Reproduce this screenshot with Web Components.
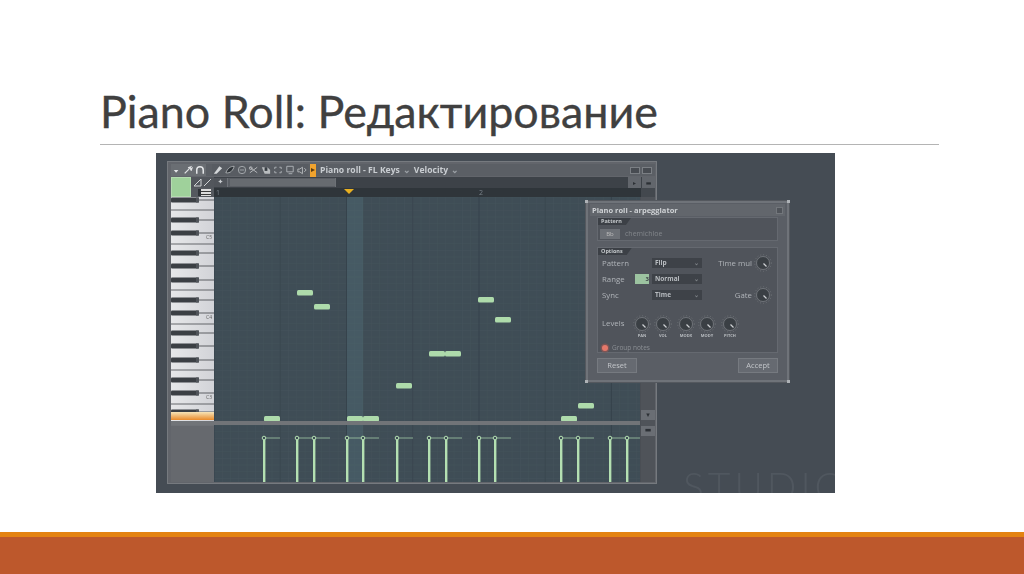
<!DOCTYPE html>
<html lang="ru"><head><meta charset="utf-8"><title>Piano Roll</title>
<style>html,body{margin:0;padding:0;background:#fff}body{width:1024px;height:574px;overflow:hidden}</style>
</head><body>
<slide-page>
  <slide-title>Piano Roll: Редактирование</slide-title>
  <piano-shot>
    <roll-toolbar></roll-toolbar>
    <roll-ruler></roll-ruler>
    <roll-body></roll-body>
    <arp-dialog></arp-dialog>
  </piano-shot>
</slide-page>
<script>
const def=(n,html)=>{customElements.define(n,class extends HTMLElement{constructor(){super();this.attachShadow({mode:'open'}).innerHTML=html;}})};

def('slide-page',`<style>:host{display:flex;flex-direction:column;width:1024px;height:574px;box-sizing:border-box}
.main{flex:1;display:flex;flex-direction:column;min-height:0}
footer{height:42px;background:#bd582c;border-top:5px solid #e48312;box-sizing:border-box}</style>
<div class="main"><slot></slot></div><footer></footer>`);

def('slide-title',`<style>:host{display:block;margin:0 85px 0 100px;padding-top:85px;height:59px;box-sizing:content-box;border-bottom:1px solid #b4b4b4;
font:44.800px/53px Lato,"Liberation Sans",sans-serif;color:#404040;-webkit-text-stroke:.35px #404040}
div{white-space:nowrap;height:59px}</style><div><slot></slot></div>`);

def('piano-shot',`<style>:host{display:block;position:relative;width:679px;height:340px;margin:8px 0 0 156px;background:#454c54;overflow:hidden;box-sizing:border-box;padding:8px 178px 9px 11px;filter:blur(.6px)}
.win{height:100%;background:#62656b;box-sizing:border-box;padding:2px 1px 3px 3px;display:flex;flex-direction:column;border:1px solid #767a7f}
.mark{position:absolute;left:527px;top:313px;font:300 39px/40px Lato,sans-serif;letter-spacing:4px;color:#50575f;white-space:nowrap}
::slotted(arp-dialog){position:absolute;left:430px;top:48px}</style>
<div class="mark">STUDIO</div><div class="win"><slot></slot></div>`);

const ico={
 menu:'<path d="M3 6h5L5.500 9z" fill="#e4e6e8"/>',
 wrench:'<path d="M2 10 7 5M6 3.500l3-1-1 1.500 1 1 1.500-1-1 3" stroke="#e0e2e4" stroke-width="1.500" fill="none"/>',
 magnet:'<path d="M3 10V6a3.500 3.500 0 0 1 7 0v4" stroke="#e6e8ea" stroke-width="1.600" fill="none"/>',
 pen:'<path d="M2 10 8 2l3 2-6 6z" fill="#d4d7d9"/>',
 brush:'<path d="M2 9c2-5 5-7 9-7-1 4-4 8-9 7z" fill="#2e3338" stroke="#b8bbbe" stroke-width=".9"/>',
 circ:'<circle cx="6.500" cy="6" r="4" fill="none" stroke="#a6aaae"/><path d="M4 6h5" stroke="#a6aaae"/>',
 cut:'<path d="M2 3l8 6M2 9l8-6" stroke="#b8bbbe"/><circle cx="3" cy="4" r="1.500" fill="none" stroke="#b8bbbe"/>',
 sel:'<path d="M2 3h6l3 3v4H5z" fill="#c9cccf" opacity=".85"/><path d="M5 3h3v4H5z" fill="#3a3f45"/>',
 box:'<path d="M3 3h2M8 3h2M3 9h2M8 9h2M3 3v2M10 3v2M3 7v2M10 7v2" stroke="#aeb2b6"/>',
 zoom:'<path d="M3 2h7v6H3zM5 10h4" stroke="#aeb2b6" fill="none"/>',
 spk:'<path d="M2 5h2l3-2v7L4 8H2zM9 4l2 2-2 2" stroke="#b5b8bb" fill="none"/>'
};
const ib=(k,w=12)=>`<svg width="${w}" height="12" viewBox="0 0 13 12">${ico[k]}</svg>`;
def('roll-toolbar',`<style>:host{display:flex;align-items:center;height:12px;margin-bottom:1px;font:bold 8.600px/12px "Open Sans",sans-serif;color:#c9cdd1;background:#5b5f65;white-space:nowrap}
.g{display:flex}.g1{background:#6a6e73;margin-right:6px}.g2{background:#585c62;margin-right:2px}
svg{display:block}
.play{width:6px;height:13px;background:#f0a32e;margin:0 4px 0 0;position:relative}.play:after{content:"";position:absolute;left:1px;top:4px;border-left:4px solid #5a3a10;border-top:2.500px solid transparent;border-bottom:2.500px solid transparent}
.c{color:#9da2a7;width:14px;text-align:center}.r{margin-left:auto;display:flex;gap:2px;margin-right:3px}.r i{display:block;width:10px;height:7px;background:#484c52;border:1px solid #7b7f84;box-sizing:border-box}</style>
<div class="g g1">${ib('menu')}${ib('wrench',11)}${ib('magnet')}</div>
<div class="g g2">${ib('pen')}${ib('brush')}${ib('circ')}${ib('cut')}${ib('sel')}${ib('box')}${ib('zoom')}${ib('spk')}</div>
<div class="play"></div><span>Piano roll - FL Keys</span><span class="c">⌄</span><span>Velocity</span><span class="c">⌄</span>
<div class="r"><i></i><i></i></div>`);

def('roll-ruler',`<style>:host{display:grid;grid-template-columns:20px 23px 1fr;grid-template-rows:11px 9px;height:20px;background:#43484e;color:#c9cdd1;font:7px/9px "Open Sans",sans-serif}
.sw{grid-row:1/3;background:#9fd19b;border:1px solid #b4dbb0;box-sizing:border-box}
.tools{background:#52565c;display:flex;align-items:center;justify-content:space-around;padding:0 2px}
.tools svg{display:block}
.ovw{display:flex;align-items:stretch;background:#3d4248}
.scr{width:122px;display:flex;background:#5a5e64;margin:1px 0;box-sizing:border-box;border-right:1px solid #6d7176}.scr b{width:13px;border-right:1px solid #70747a;background:#50545a;text-align:center;font:7px/9px "DejaVu Sans",sans-serif}.scr u{flex:1;margin:1px 0 1px 2px;background:#676b70}
.end{margin-left:auto;display:flex;gap:1px}.end i{display:block;width:13px;background:#62666c;color:#2c3035;font:normal 6px/11px "DejaVu Sans",sans-serif;text-align:center}
.prt{grid-column:2;background:#55595f;display:flex;align-items:center;justify-content:flex-end;padding-right:3px}.prt i{display:block;width:10px;height:7px;background:linear-gradient(#ddd 0 2px,#3a3a3a 2px 3px,#ddd 3px 5px,#3a3a3a 5px 6px,#ddd 6px);border-left:3px solid #2f3338}
.ruler{grid-column:3;background:#2f353a;position:relative;margin-right:14px}
.ruler span{position:absolute;top:0;color:#79828a}.hd{position:absolute;left:130px;top:1px;width:0;height:0;border-top:5px solid #e9b021;border-left:5px solid transparent;border-right:5px solid transparent}</style>
<div class="sw"></div>
<div class="tools"><svg width="9" height="9"><path d="M1 8 8 1v7z" fill="none" stroke="#cfd2d4"/></svg><svg width="9" height="9"><path d="M1 8 8 1" stroke="#cfd2d4"/></svg></div>
<div class="ovw"><div class="scr"><b>✦</b><u></u></div><div class="end"><i>▸</i><i>▬</i></div></div>
<div class="prt"><i></i></div>
<div class="ruler"><span style="left:2px">1</span><span style="left:265px">2</span><div class="hd"></div></div>`);

const gridBg=()=>{let s='';
 for(let y=0;y<225;y+=6.67)s+=`<path d="M0 ${y.toFixed(1)}H426" stroke="#47555d" stroke-width=".5"/>`;
 for(let x=0,i=0;x<=426;x+=8.28,i++){const m=i%8==0,mm=i%16==0;s+=`<path d="M${x.toFixed(1)} 0V225" stroke="${mm?'#36434c':m?'#3a4750':'#46545c'}" stroke-width="${m?1:.5}"/>`}
 return s};
const keys=()=>{let s='<defs><linearGradient id="w" x1="0" x2="1" y1="0" y2="0"><stop offset="0" stop-color="#e6e7e9"/><stop offset="1" stop-color="#d2d3d8"/></linearGradient><linearGradient id="o" x1="0" y1="0" x2="0" y2="1"><stop offset="0" stop-color="#f6e4b8"/><stop offset="1" stop-color="#e98a2a"/></linearGradient></defs><rect width="43" height="224" fill="url(#w)"/>';
 const blacks=[3,23,36,56,69,83,103,116,136,149,163,183,196,215];
 [13,47,93,127,173,207].forEach(y=>s+=`<path d="M0 ${y}H43" stroke="#44484d" stroke-width=".8"/>`);
 blacks.forEach(y=>s+=`<path d="M26 ${y}H43" stroke="#3c4045" stroke-width=".8"/><rect x="0" y="${y-2.500}" width="28" height="5" rx="1" fill="#3b3f44"/><rect x="25" y="${y-2.500}" width="3" height="5" fill="#50545a"/>`);
 s+='<rect y="215" width="43" height="8" fill="url(#o)"/>';
 [['C5',42],['C4',122],['C3',202]].forEach(([t,y])=>s+=`<text x="41" y="${y}" text-anchor="end" font-family="Open Sans,sans-serif" font-size="5" fill="#666">${t}</text>`);
 return s};
const notes=[[83,93],[100,107],[50,219],[133,219],[149,219],[182,186],[215,154],[231,154],[264,100],[281,120],[347,219],[364,206]];
const stems=[[50,16],[83,16],[100,16],[133,16],[149,16],[183,16],[215,16],[232,16],[265,16],[281,16],[347,16],[364,16],[396,16],[413,13]];
def('roll-body',`<style>:host{display:grid;grid-template-columns:43px 1fr 15px;grid-template-rows:224px 4px 57px;flex:1;min-height:0}
svg{display:block}
.k{grid-row:1}.pane{background:#3f4d56}.sb{grid-row:1/4;grid-column:3;background:#4f5359;display:flex;flex-direction:column;border-left:1px solid #4a4e54;box-sizing:border-box;gap:1px}
.sb b{display:block;height:10px;background:#6a6e74;color:#2c3035;font:7px/10px "DejaVu Sans",sans-serif;text-align:center}.sp{flex:1}
.div{grid-column:1/3;background:#717478}.tr{grid-row:3;grid-column:1;background:#66696e;border-top:1px solid #6e7176}
.v{grid-row:3;grid-column:2}</style>
<svg class="k" width="43" height="224">${keys()}</svg>
<svg class="pane" width="426" height="224">${gridBg()}<rect x="133" width="16" height="224" fill="#5a7c88" opacity=".28"/>
${notes.map(([x,y])=>`<rect x="${x}" y="${y}" width="16" height="5.500" rx="1.500" fill="#aedbab"/>`).join('')}</svg>
<div class="sb"><div class="sp"></div><b>▾</b><div style="height:4px"></div><b style="line-height:8px">▬</b><div style="height:45px"></div></div>
<div class="div"></div>
<div class="tr"></div>
<svg class="pane v" width="426" height="57" viewBox="0 0 426 57">${gridBg()}<rect x="133" width="16" height="57" fill="#5a7c88" opacity=".28"/>
${stems.map(([x,l])=>`<path d="M${x} 13H${x+l}" stroke="#9fc8a5" stroke-width=".8"/><rect x="${x-1}" y="13" width="2.400" height="44" fill="#b4e0b2"/><circle cx="${x}" cy="13" r="1.800" fill="#3f4d56" stroke="#b4e0b2" stroke-width="1"/>`).join('')}</svg>`);

const knob=`<svg width="18" height="18" viewBox="-9 -9 18 18"><circle r="8.300" fill="none" stroke="#777b80" stroke-width=".7" stroke-dasharray="1 2"/><circle r="6.500" fill="#3a3f44" stroke="#7a7e83" stroke-width=".8"/><path d="M.5 .5 3.500 3.500" stroke="#cfd2d5" stroke-width="1.200"/></svg>`;
def('arp-knob',`<style>:host{display:flex;flex-direction:column;align-items:center;font:bold 4px/5px "Open Sans",sans-serif;color:#b9bdc1;width:18px;flex:none}svg{display:block}</style>${knob}<slot></slot>`);
def('arp-select',`<style>:host{display:flex;justify-content:space-between;align-items:center;box-sizing:border-box;width:50px;height:10px;background:#3e4248;padding:0 3px;font:bold 6.500px/10px "Open Sans",sans-serif;color:#b9bdc1}i{font-style:normal;color:#80858a;font-size:6px}</style><span><slot></slot></span><i>⌄</i>`);
def('arp-dialog',`<style>:host{display:flex;flex-direction:column;box-sizing:border-box;width:203px;height:181px;background:#5a5e65;border:2px solid #6f7379;padding:0 9px 7px;font:7.800px/10px "Open Sans",sans-serif;color:#b0b4b9;box-shadow:0 0 0 1px #54585e}
.nub{position:absolute;width:3px;height:3px;background:#aeb2b6}
.tb{display:flex;justify-content:space-between;align-items:center;height:12px;margin:1px -7px 1px;font:bold 7.500px/12px "Open Sans",sans-serif;color:#cfd2d5;background:#62666c;padding:0 2px 0 2px}.tb i{display:block;width:7px;height:7px;background:#50545a;border:1px solid #73777c;box-sizing:border-box}
.grp{background:#50545b;border:1px solid #656970;position:relative;box-sizing:border-box}
.tag{position:absolute;left:0;top:0;height:7px;padding:0 9px 0 3px;background:#3c4046;clip-path:polygon(0 0,100% 0,calc(100% - 5px) 100%,0 100%);font:bold 5.500px/7px "Open Sans",sans-serif;color:#c4c8cb}
.p{height:24px;display:flex;align-items:center;gap:5px;padding:9px 0 0 2px;margin-bottom:6px;color:#82868b;font-size:7px}
.p b{display:block;width:20px;height:10px;background:#6c7076;color:#bbb;font:6px/10px "Open Sans",sans-serif;text-align:center}
.o{height:106px;display:grid;grid-template-columns:33px 17px 50px 1fr;grid-template-rows:10px 10px 10px 33px 10px;row-gap:6px;padding:10px 0 0 4px;align-content:start}
.kn{grid-column:4;display:flex;align-items:center;justify-content:flex-end;gap:2px;margin:-4px 5px -4px 0}
.lv{grid-column:1/5;display:flex;align-items:flex-start;margin-top:9px;height:24px}.lv span{width:31px;padding-top:3px;flex:none}
.lv arp-knob:nth-of-type(2),.lv arp-knob:nth-of-type(4){margin-left:3px}.lv arp-knob:nth-of-type(3),.lv arp-knob:nth-of-type(5){margin-left:5px}
.gn{grid-column:1/5;display:flex;align-items:center;gap:4px;margin-top:-4px;font-size:6.500px;color:#8b8f94}.gn i{display:block;width:6px;height:6px;border-radius:50%;background:#e5786a;box-shadow:0 0 0 1.500px #7c5555}
.st{width:14px;height:10px;background:#9cc3a0;display:block;color:#3d4448;font:bold 6px/10px "Open Sans",sans-serif;text-align:right}
.bt{display:flex;justify-content:space-between;margin-top:5px}.bt b{display:block;width:40px;height:15px;background:#666a71;border:1px solid #767a80;box-sizing:border-box;font:7.500px/13px "Open Sans",sans-serif;text-align:center;color:#c3c6ca}</style>
<i class="nub" style="left:-3px;top:-3px"></i><i class="nub" style="right:-3px;top:-3px"></i><i class="nub" style="left:-3px;bottom:-3px"></i><i class="nub" style="right:-3px;bottom:-3px"></i>
<div class="tb"><span>Piano roll - arpeggiator</span><i></i></div>
<div class="grp p"><div class="tag">Pattern</div><b>Bb</b><span>chemichloe</span></div>
<div class="grp o"><div class="tag">Options</div>
<span>Pattern</span><span></span><arp-select>Flip</arp-select><div class="kn"><span>Time mul</span><arp-knob></arp-knob></div>
<span>Range</span><span class="st">3</span><arp-select>Normal</arp-select><span></span>
<span>Sync</span><span></span><arp-select>Time</arp-select><div class="kn"><span>Gate</span><arp-knob></arp-knob></div>
<div class="lv"><span>Levels</span><arp-knob>PAN</arp-knob><arp-knob>VOL</arp-knob><arp-knob>MODX</arp-knob><arp-knob>MODY</arp-knob><arp-knob>PITCH</arp-knob></div>
<div class="gn"><i></i>Group notes</div></div>
<div class="bt"><b>Reset</b><b>Accept</b></div>`);
</script>
</body></html>
